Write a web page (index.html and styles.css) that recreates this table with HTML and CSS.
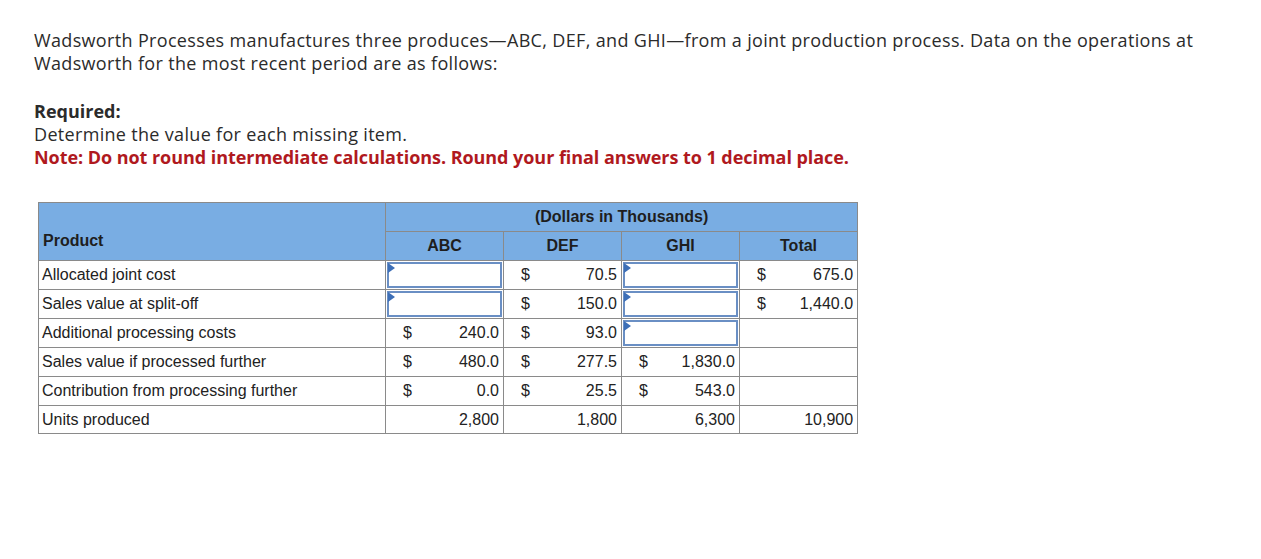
FILE: index.html
```html
<!DOCTYPE html>
<html>
<head>
<meta charset="utf-8">
<link rel="stylesheet" href="styles.css">
</head>
<body>
<div class="page">
  <p class="intro">Wadsworth Processes manufactures three produces—ABC, DEF, and GHI—from a joint production process. Data on the operations at Wadsworth for the most recent period are as follows:</p>
  <div class="req">
    <div class="req-title">Required:</div>
    <div class="plain">Determine the value for each missing item.</div>
    <div class="note">Note: Do not round intermediate calculations. Round your final answers to 1 decimal place.</div>
  </div>
  <table class="data">
    <colgroup>
      <col class="c-label">
      <col class="c-cur"><col class="c-val">
      <col class="c-cur"><col class="c-val">
      <col class="c-cur"><col class="c-val">
      <col class="c-cur"><col class="c-val">
    </colgroup>
    <thead>
      <tr>
        <th rowspan="2" class="h-product">Product</th>
        <th colspan="8" class="h-group">(Dollars in Thousands)</th>
      </tr>
      <tr class="h-sub">
        <th colspan="2">ABC</th>
        <th colspan="2">DEF</th>
        <th colspan="2">GHI</th>
        <th colspan="2">Total</th>
      </tr>
    </thead>
    <tbody>
      <tr>
        <td class="lbl">Allocated joint cost</td>
        <td colspan="2" class="inp"><div class="box"></div></td>
        <td class="cur">$</td><td class="val">70.5</td>
        <td colspan="2" class="inp"><div class="box"></div></td>
        <td class="cur">$</td><td class="val">675.0</td>
      </tr>
      <tr>
        <td class="lbl">Sales value at split-off</td>
        <td colspan="2" class="inp"><div class="box"></div></td>
        <td class="cur">$</td><td class="val">150.0</td>
        <td colspan="2" class="inp"><div class="box"></div></td>
        <td class="cur">$</td><td class="val">1,440.0</td>
      </tr>
      <tr>
        <td class="lbl">Additional processing costs</td>
        <td class="cur">$</td><td class="val">240.0</td>
        <td class="cur">$</td><td class="val">93.0</td>
        <td colspan="2" class="inp"><div class="box"></div></td>
        <td class="cur"></td><td class="val"></td>
      </tr>
      <tr>
        <td class="lbl">Sales value if processed further</td>
        <td class="cur">$</td><td class="val">480.0</td>
        <td class="cur">$</td><td class="val">277.5</td>
        <td class="cur">$</td><td class="val">1,830.0</td>
        <td class="cur"></td><td class="val"></td>
      </tr>
      <tr>
        <td class="lbl">Contribution from processing further</td>
        <td class="cur">$</td><td class="val">0.0</td>
        <td class="cur">$</td><td class="val">25.5</td>
        <td class="cur">$</td><td class="val">543.0</td>
        <td class="cur"></td><td class="val"></td>
      </tr>
      <tr class="last">
        <td class="lbl">Units produced</td>
        <td class="cur"></td><td class="val">2,800</td>
        <td class="cur"></td><td class="val">1,800</td>
        <td class="cur"></td><td class="val">6,300</td>
        <td class="cur"></td><td class="val">10,900</td>
      </tr>
    </tbody>
  </table>
</div>
</body>
</html>
```

FILE: styles.css
```css
html, body {
  margin: 0;
  padding: 0;
  background: #ffffff;
}

.page {
  padding: 29px 34px 0 34px;
  font-family: "Open Sans", "Lato", sans-serif;
  font-size: 18px;
  line-height: 23px;
  color: #2b2b2b;
}

.intro {
  margin: 0;
  max-width: 1180px;
  letter-spacing: 0.34px;
}

.req {
  margin-top: 25px;
}

.req-title {
  font-weight: bold;
}

.plain {
  letter-spacing: 0.32px;
}

.note {
  font-weight: bold;
  color: #b0191e;
  letter-spacing: -0.05px;
}

.data {
  margin-top: 33px;
  margin-left: 4px;
  border-collapse: collapse;
  font-family: "Liberation Sans", Arial, sans-serif;
  font-size: 16px;
  line-height: 18px;
  color: #222;
  table-layout: fixed;
  width: 819px;
}

.c-label { width: 347px; }
.c-cur { width: 34px; }
.c-val { width: 84px; }

.data th,
.data td {
  border: 1px solid #8a8a8a;
  height: 29px;
  padding: 0;
  box-sizing: border-box;
}

.data tr.last td {
  height: 28px;
}

.data th {
  background: #79ade3;
  font-weight: bold;
  color: #1e1e1e;
}

.data th.h-product {
  text-align: left;
  vertical-align: bottom;
  padding-left: 4px;
  padding-bottom: 10px;
}

.h-group {
  text-align: center;
}

.data td.lbl {
  padding-left: 3px;
  text-align: left;
}

.data td.cur {
  border-right: none;
  text-align: left;
  padding-left: 17px;
}

.data td.val {
  border-left: none;
  text-align: right;
  padding-right: 4px;
}

.data td.inp {
  padding: 1px;
}

.box {
  height: 26px;
  border: 2px solid #6a8fc4;
  box-sizing: border-box;
  background: #fff;
  position: relative;
}

.box::before {
  content: "";
  position: absolute;
  left: -1px;
  top: -1px;
  border-top: 5px solid transparent;
  border-bottom: 5px solid transparent;
  border-left: 7px solid #3d6fb7;
}
```
